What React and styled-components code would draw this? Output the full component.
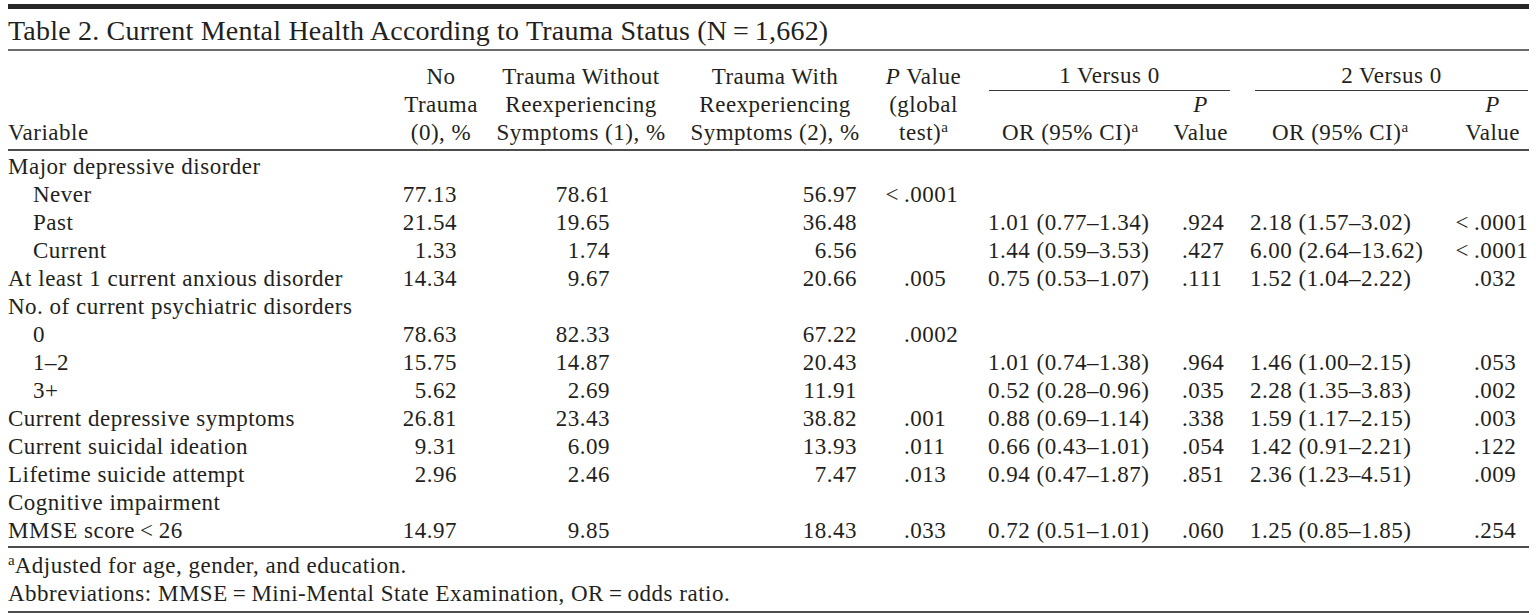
import React from "react";
import styled, { createGlobalStyle } from "styled-components";

const GlobalStyle = createGlobalStyle`
  html, body { margin: 0; padding: 0; background: #ffffff; }
  body { font-family: "Liberation Serif", "Times New Roman", serif; color: #231f20; }
`;

const COLS = "382px 102px 178px 210px 95px 190px 75px 200px 89px";

const Page = styled.div`
  width: 1521px;
  margin-left: 8px;
  padding-top: 4px;
  display: flex;
  flex-direction: column;
  font-size: 23px;
  letter-spacing: 0.5px;
`;

const TopBar = styled.div`
  height: 5px;
  background: #262626;
`;

const Title = styled.h1`
  margin: 7px 0 0;
  font-size: 28px;
  font-weight: 400;
  line-height: 30px;
  letter-spacing: 0.2px;
  white-space: nowrap;
`;

const Rule = styled.div`
  height: 2px;
  background: ${(p) => p.$color || "#4d4d4d"};
  margin-top: ${(p) => p.$gap}px;
`;

const HeadGrid = styled.div`
  display: grid;
  grid-template-columns: ${COLS};
  grid-template-rows: repeat(3, 28px);
  margin-top: 12px;
  line-height: 28px;
`;

const ColHead = styled.div`
  grid-row: 1 / 4;
  grid-column: ${(p) => p.$col};
  display: flex;
  flex-direction: column;
  justify-content: flex-end;
  align-items: ${(p) => (p.$left ? "flex-start" : "center")};
  padding-right: ${(p) => p.$pr || 0}px;
  white-space: nowrap;
`;

const GroupHead = styled.div`
  grid-row: 1;
  grid-column: ${(p) => p.$col};
  margin: 0 ${(p) => p.$mr}px 0 ${(p) => p.$ml}px;
  border-bottom: 1.5px solid #3a3a3a;
  text-align: center;
  line-height: 26.5px;
  white-space: nowrap;
`;

const SubHead = styled.div`
  grid-row: 2 / 4;
  grid-column: ${(p) => p.$col};
  display: flex;
  flex-direction: column;
  justify-content: flex-end;
  align-items: ${(p) => (p.$end ? "flex-end" : "center")};
  padding-right: ${(p) => p.$pr || 0}px;
  white-space: nowrap;
`;

const PStack = styled.div`
  display: flex;
  flex-direction: column;
  align-items: center;
`;

const Ital = styled.i`
  font-style: italic;
`;

const Sup = styled.sup`
  font-size: 15px;
  line-height: 0;
  vertical-align: 0.55em;
  letter-spacing: 0;
`;

const BodyGrid = styled.div`
  display: grid;
  grid-template-columns: ${COLS};
  grid-auto-rows: 28px;
  line-height: 28px;
  margin-top: 2px;
`;

const Label = styled.div`
  padding-left: ${(p) => (p.$indent ? 25 : 0)}px;
  white-space: nowrap;
`;

const Num = styled.div`
  text-align: right;
  padding-right: ${(p) => p.$pr}px;
  white-space: nowrap;
`;

const Ratio = styled.div`
  text-align: left;
  padding-left: ${(p) => p.$pl}px;
  white-space: nowrap;
`;

const Dec = styled.div`
  display: flex;
  white-space: nowrap;
`;

const IntPart = styled.span`
  display: inline-block;
  width: ${(p) => p.$at}px;
  text-align: right;
  flex: none;
`;

const Notes = styled.div`
  margin-top: 4px;
  line-height: 28px;
  white-space: nowrap;
`;

const rows = [
  { label: "Major depressive disorder" },
  { label: "Never", indent: true, v: ["77.13", "78.61", "56.97"], p: "<.0001" },
  { label: "Past", indent: true, v: ["21.54", "19.65", "36.48"], or1: "1.01 (0.77–1.34)", p1: ".924", or2: "2.18 (1.57–3.02)", p2: "<.0001" },
  { label: "Current", indent: true, v: ["1.33", "1.74", "6.56"], or1: "1.44 (0.59–3.53)", p1: ".427", or2: "6.00 (2.64–13.62)", p2: "<.0001" },
  { label: "At least 1 current anxious disorder", v: ["14.34", "9.67", "20.66"], p: ".005", or1: "0.75 (0.53–1.07)", p1: ".111", or2: "1.52 (1.04–2.22)", p2: ".032" },
  { label: "No. of current psychiatric disorders" },
  { label: "0", indent: true, v: ["78.63", "82.33", "67.22"], p: ".0002" },
  { label: "1–2", indent: true, v: ["15.75", "14.87", "20.43"], or1: "1.01 (0.74–1.38)", p1: ".964", or2: "1.46 (1.00–2.15)", p2: ".053" },
  { label: "3+", indent: true, v: ["5.62", "2.69", "11.91"], or1: "0.52 (0.28–0.96)", p1: ".035", or2: "2.28 (1.35–3.83)", p2: ".002" },
  { label: "Current depressive symptoms", v: ["26.81", "23.43", "38.82"], p: ".001", or1: "0.88 (0.69–1.14)", p1: ".338", or2: "1.59 (1.17–2.15)", p2: ".003" },
  { label: "Current suicidal ideation", v: ["9.31", "6.09", "13.93"], p: ".011", or1: "0.66 (0.43–1.01)", p1: ".054", or2: "1.42 (0.91–2.21)", p2: ".122" },
  { label: "Lifetime suicide attempt", v: ["2.96", "2.46", "7.47"], p: ".013", or1: "0.94 (0.47–1.87)", p1: ".851", or2: "2.36 (1.23–4.51)", p2: ".009" },
  { label: "Cognitive impairment" },
  { label: "MMSE score\u2009<\u200926", v: ["14.97", "9.85", "18.43"], p: ".033", or1: "0.72 (0.51–1.01)", p1: ".060", or2: "1.25 (0.85–1.85)", p2: ".254" },
];

function DecimalCell({ value, at }) {
  if (!value) return <div />;
  const i = value.indexOf(".");
  let int = value.slice(0, i);
  if (int === "<") int = "<\u2009";
  return (
    <Dec>
      <IntPart $at={at}>{int}</IntPart>
      <span>{value.slice(i)}</span>
    </Dec>
  );
}

const NUM_PR = [35, 60, 23];

function BodyRow({ row }) {
  const v = row.v || ["", "", ""];
  return (
    <>
      <Label $indent={row.indent}>{row.label}</Label>
      {v.map((x, i) => (
        <Num key={i} $pr={NUM_PR[i]}>{x}</Num>
      ))}
      <DecimalCell value={row.p} at={24} />
      <Ratio $pl={13}>{row.or1 || ""}</Ratio>
      <DecimalCell value={row.p1} at={17} />
      <Ratio $pl={10}>{row.or2 || ""}</Ratio>
      <DecimalCell value={row.p2} at={34} />
    </>
  );
}

export default function App() {
  return (
    <>
      <GlobalStyle />
      <Page>
        <TopBar />
        <Title>Table 2. Current Mental Health According to Trauma Status (N{"\u2009=\u2009"}1,662)</Title>
        <Rule $gap={3} $color="#6b6b6b" />
        <HeadGrid>
          <ColHead $col="1" $left>
            <span>Variable</span>
          </ColHead>
          <ColHead $col="2">
            <span>No</span>
            <span>Trauma</span>
            <span>(0), %</span>
          </ColHead>
          <ColHead $col="3">
            <span>Trauma Without</span>
            <span>Reexperiencing</span>
            <span>Symptoms (1), %</span>
          </ColHead>
          <ColHead $col="4">
            <span>Trauma With</span>
            <span>Reexperiencing</span>
            <span>Symptoms (2), %</span>
          </ColHead>
          <ColHead $col="5" $pr={8}>
            <span>
              <Ital>P</Ital> Value
            </span>
            <span>(global</span>
            <span>
              test)<Sup>a</Sup>
            </span>
          </ColHead>
          <GroupHead $col="6 / 8" $ml={14} $mr={10}>1 Versus 0</GroupHead>
          <GroupHead $col="8 / 10" $ml={15} $mr={1}>2 Versus 0</GroupHead>
          <SubHead $col="6">
            <span>
              OR (95% CI)<Sup>a</Sup>
            </span>
          </SubHead>
          <SubHead $col="7" $end $pr={12}>
            <PStack>
              <Ital>P</Ital>
              <span>Value</span>
            </PStack>
          </SubHead>
          <SubHead $col="8">
            <span>
              OR (95% CI)<Sup>a</Sup>
            </span>
          </SubHead>
          <SubHead $col="9" $end $pr={9}>
            <PStack>
              <Ital>P</Ital>
              <span>Value</span>
            </PStack>
          </SubHead>
        </HeadGrid>
        <Rule $gap={2} />
        <BodyGrid>
          {rows.map((r, i) => (
            <BodyRow key={i} row={r} />
          ))}
        </BodyGrid>
        <Rule $gap={1} />
        <Notes>
          <div>
            <Sup>a</Sup>Adjusted for age, gender, and education.
          </div>
          <div>Abbreviations: MMSE{"\u2009=\u2009"}Mini-Mental State Examination, OR{"\u2009=\u2009"}odds ratio.</div>
        </Notes>
        <Rule $gap={3} />
      </Page>
    </>
  );
}
